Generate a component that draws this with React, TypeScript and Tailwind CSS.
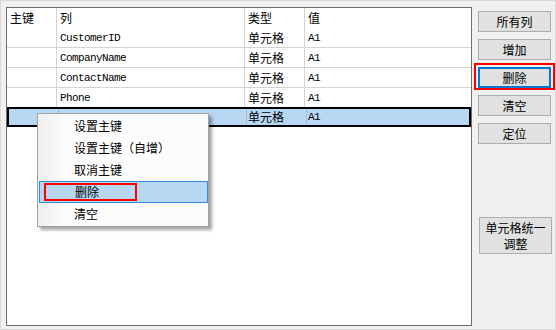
import React from "react";

const rows = [
  { key: "", col: "CustomerID", type: "单元格", value: "A1" },
  { key: "", col: "CompanyName", type: "单元格", value: "A1" },
  { key: "", col: "ContactName", type: "单元格", value: "A1" },
  { key: "", col: "Phone", type: "单元格", value: "A1" },
];

const cjk = "font-['Noto_Sans_CJK_SC','Noto_Sans',sans-serif]";
const mono = "font-['Liberation_Mono','Noto_Sans_CJK_SC',monospace]";

function Cells({ cells, line }: { cells: React.ReactNode[]; line: string }) {
  const widths = ["w-[50px]", "w-[188px]", "w-[60px]", "flex-1"];
  return (
    <>
      {cells.map((c, i) => (
        <div
          key={i}
          className={`${widths[i]} flex h-full items-center pl-[3px] leading-[14px] ${i < 3 ? `border-r ${line}` : ""}`}
        >
          {c}
        </div>
      ))}
    </>
  );
}

function Btn({ children, focused }: { children: React.ReactNode; focused?: boolean }) {
  return (
    <div className="relative">
      <button
        className={`flex h-[21px] w-[73px] items-center justify-center bg-[#e1e1e1] text-[12px] leading-[14px] text-black ${cjk} ${
          focused ? "border-2 border-[#0078d7]" : "border border-[#adadad]"
        }`}
      >
        {children}
      </button>
      {focused && (
        <span className="pointer-events-none absolute -left-[4px] -top-[4px] -right-[3px] -bottom-[2px] border-2 border-[#ff0000]" />
      )}
    </div>
  );
}

const menuItems = ["设置主键", "设置主键（自增）", "取消主键", "删除", "清空"];

export default function App() {
  return (
    <div className="relative flex h-[330px] w-[556px] border border-[#dadada] bg-[#f0f0f0] pl-[5px] pt-[6px] text-black">
      {/* grid */}
      <div className="flex h-[319px] w-[466px] flex-col border border-[#6e6e6e] bg-white text-[12px]">
        <div className={`flex h-[20px] shrink-0 ${cjk}`}>
          <Cells line="border-[#d4d4d4]" cells={["主键", "列", "类型", "值"]} />
        </div>
        {rows.map((r, i) => (
          <div
            key={r.col}
            className={`flex shrink-0 ${i < 3 ? "h-[20px] border-b border-[#d4d4d4]" : "h-[19px]"}`}
          >
            <Cells
              line="border-[#d4d4d4]"
              cells={[
                r.key,
                <span className={`${mono} text-[11px] tracking-[-0.6px]`}>{r.col}</span>,
                <span className={cjk}>{r.type}</span>,
                <span className={`${mono} text-[11px] tracking-[-0.6px]`}>{r.value}</span>,
              ]}
            />
          </div>
        ))}
        <div className="flex h-[20px] shrink-0 border-2 border-black bg-[#b7d7f2]">
          <Cells
            line="border-[#9fc0dc]"
            cells={[
              "",
              "",
              <span className={`${cjk} -ml-[2px]`}>单元格</span>,
              <span className={`${mono} -ml-[2px] text-[11px] tracking-[-0.6px]`}>A1</span>,
            ]}
          />
        </div>
      </div>

      {/* buttons */}
      <div className="ml-[6px] flex flex-col gap-[7px] pt-[4px]">
        <Btn>所有列</Btn>
        <Btn>增加</Btn>
        <Btn focused>删除</Btn>
        <Btn>清空</Btn>
        <Btn>定位</Btn>
        <button
          className={`mt-[66px] ml-[1px] flex h-[37px] w-[73px] flex-col items-center justify-center border border-[#adadad] bg-[#e1e1e1] text-[12px] leading-[16px] ${cjk}`}
        >
          <span>单元格统一</span>
          <span>调整</span>
        </button>
      </div>

      {/* context menu */}
      <div
        className={`absolute left-[36px] top-[112px] flex h-[114px] w-[172px] flex-col border border-[#a0a0a0] bg-[#fcfcfc] pt-[1px] shadow-[3px_3px_3px_rgba(0,0,0,0.35)] ${cjk} text-[12px]`}
      >
        <div className="absolute left-0 top-0 h-full w-[25px] bg-gradient-to-r from-[#efefef] to-[#f9f9f9]" />
        {menuItems.map((m) => {
          const active = m === "删除";
          return (
            <div
              key={m}
              className={`relative ml-[1px] flex h-[22px] items-center pl-[35px] leading-[14px] ${
                active ? "border border-[#2f8ae0] bg-[#b7d7f2] pl-[34px]" : ""
              }`}
            >
              {m}
              {active && (
                <span className="absolute left-[4px] top-[1px] h-[18px] w-[93px] border-2 border-[#ff0000]" />
              )}
            </div>
          );
        })}
      </div>
    </div>
  );
}
